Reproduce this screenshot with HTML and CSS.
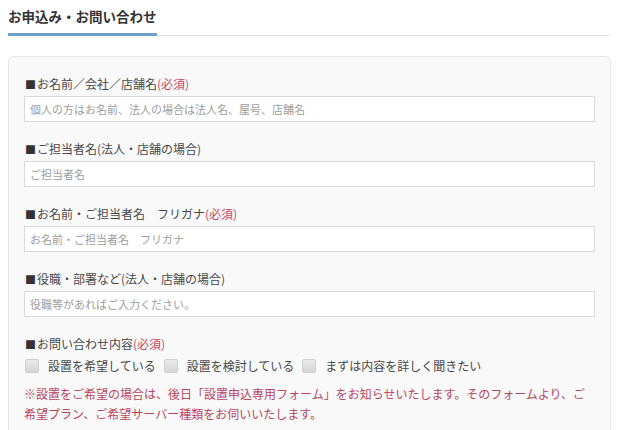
FILE: index.html
```html
<!DOCTYPE html>
<html lang="ja">
<head>
    <meta charset="UTF-8">
    <meta name="viewport" content="width=device-width, initial-scale=1.0">
    <title>お申込み・お問い合わせ</title>
    <link rel="stylesheet" href="styles.css">
</head>
<body>
    <div class="wrap">
        <h2 class="title"><span>お申込み・お問い合わせ</span></h2>

        <form class="form-box">
            <div class="field">
                <label class="field-label"><i>■</i>お名前／会社／店舗名<em>(必須)</em></label>
                <input type="text" class="text-input" placeholder="個人の方はお名前、法人の場合は法人名、屋号、店舗名">
            </div>
            <div class="field">
                <label class="field-label"><i>■</i>ご担当者名(法人・店舗の場合)</label>
                <input type="text" class="text-input" placeholder="ご担当者名">
            </div>
            <div class="field">
                <label class="field-label"><i>■</i>お名前・ご担当者名　フリガナ<em>(必須)</em></label>
                <input type="text" class="text-input" placeholder="お名前・ご担当者名　フリガナ">
            </div>
            <div class="field">
                <label class="field-label"><i>■</i>役職・部署など(法人・店舗の場合)</label>
                <input type="text" class="text-input" placeholder="役職等があればご入力ください。">
            </div>
            <div class="field last">
                <label class="field-label"><i>■</i>お問い合わせ内容<em>(必須)</em></label>
                <div class="checks">
                    <label class="check"><input type="checkbox"><span>設置を希望している</span></label>
                    <label class="check"><input type="checkbox"><span>設置を検討している</span></label>
                    <label class="check"><input type="checkbox"><span>まずは内容を詳しく聞きたい</span></label>
                </div>
                <p class="note">※設置をご希望の場合は、後日「設置申込専用フォーム」をお知らせいたします。そのフォームより、ご希望プラン、ご希望サーバー種類をお伺いいたします。</p>
            </div>
        </form>
    </div>
</body>
</html>
```

FILE: styles.css
```css
body {
    margin: 8px;
    font-family: "Noto Sans CJK JP", "Noto Sans", sans-serif;
    color: #444;
    background-color: #fff;
}

.wrap {
    width: 603px;
}

.title {
    margin: 0 0 20px;
    display: flex;
    border-bottom: 1px solid #e2e2e2;
    font-size: 13.5px;
    line-height: 16px;
    font-weight: bold;
    color: #333;
}

.title span {
    padding-bottom: 9px;
    margin-bottom: -1px;
    border-bottom: 3px solid #6ba0ca;
}

.form-box {
    margin: 0;
    padding: 18px 15px 8px;
    background-color: #f9f9f9;
    border: 1px solid #e8e8e8;
    border-bottom: none;
    border-radius: 6px 6px 0 0;
}

.field {
    margin-bottom: 18px;
}

.field.last {
    margin-bottom: 0;
}

.field-label {
    display: block;
    margin-bottom: 3px;
    font-size: 12px;
    line-height: 18px;
    color: #484848;
}

.field-label i {
    font-style: normal;
    font-size: 11px;
    color: #333;
    margin: 0 1px 0 1px;
}

.field-label em {
    font-style: normal;
    color: #c04a62;
}

.text-input {
    display: block;
    box-sizing: border-box;
    width: 100%;
    height: 26px;
    margin: 0;
    padding: 0 5px;
    border: 1px solid #d9d9d9;
    background-color: #fff;
    font-family: inherit;
    font-size: 11px;
    color: #444;
    outline: none;
}

.text-input::placeholder {
    color: #9d9d9d;
}

.checks {
    display: flex;
    height: 20px;
    align-items: center;
}

.check {
    display: flex;
    align-items: center;
    margin-right: 7px;
    font-size: 12px;
    line-height: 18px;
    color: #484848;
}

.check input {
    -webkit-appearance: none;
    appearance: none;
    box-sizing: border-box;
    width: 14px;
    height: 14px;
    margin: 0 9px 0 1px;
    border: 1px solid #cfcfcf;
    border-radius: 2px;
    background: linear-gradient(#e9e9e9, #d6d6d6);
}

.note {
    margin: 8px 0 0;
    font-size: 12px;
    line-height: 20px;
    color: #b8455d;
}
```
